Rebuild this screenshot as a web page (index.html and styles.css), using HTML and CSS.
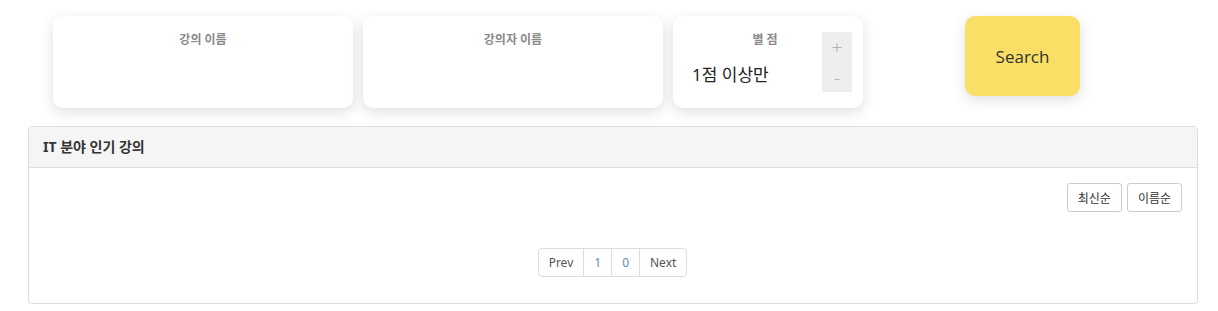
FILE: index.html
```html
<!DOCTYPE html>
<html lang="ko">
<head>
    <meta charset="UTF-8">
    <meta name="viewport" content="width=device-width, initial-scale=1.0">
    <title>강의 검색</title>
    <link rel="stylesheet" href="styles.css">
</head>
<body>
    <!-- 검색 영역 -->
    <div class="search-row">
        <div class="search-card">
            <div class="card-label">강의 이름</div>
        </div>
        <div class="search-card">
            <div class="card-label">강의자 이름</div>
        </div>
        <div class="search-card rating-card">
            <div class="rating-main">
                <div class="card-label rating-label">별 점</div>
                <div class="rating-value">1점 이상만</div>
            </div>
            <div class="stepper">
                <button class="step">+</button>
                <button class="step">-</button>
            </div>
        </div>
        <button class="search-btn">Search</button>
    </div>

    <!-- 강의 목록 -->
    <div class="panel">
        <div class="panel-heading">IT 분야 인기 강의</div>
        <div class="panel-body">
            <div class="sort-buttons">
                <button class="sort-btn">최신순</button>
                <button class="sort-btn">이름순</button>
            </div>
            <ul class="pagination">
                <li><a href="#" class="page-text">Prev</a></li>
                <li><a href="#">1</a></li>
                <li><a href="#">0</a></li>
                <li><a href="#" class="page-text">Next</a></li>
            </ul>
        </div>
    </div>
</body>
</html>
```

FILE: styles.css
```css
body {
    margin: 0;
    padding: 0;
    background-color: #fff;
    color: #333;
    font-family: "Noto Sans", "Noto Sans CJK KR", sans-serif;
}

.search-row {
    display: flex;
    align-items: flex-start;
    gap: 10px;
    padding: 16px 0 0 53px;
}

.search-card {
    width: 300px;
    height: 92px;
    background-color: #fff;
    border-radius: 10px;
    box-shadow: 0 4px 14px rgba(0, 0, 0, 0.13);
    box-sizing: border-box;
    padding-top: 14px;
}

.card-label {
    text-align: center;
    font-size: 12px;
    font-weight: bold;
    color: #8a8a8a;
    line-height: 20px;
}

.rating-card {
    width: 190px;
    display: flex;
    padding: 14px 11px 0 19px;
}

.rating-main {
    flex: 1;
}

.rating-label {
    padding-left: 16px;
}

.rating-value {
    margin-top: 13px;
    font-size: 17px;
    color: #222;
    line-height: 24px;
}

.stepper {
    width: 30px;
    height: 60px;
    margin-top: 2px;
    background-color: #eee;
    border-radius: 2px;
    display: flex;
    flex-direction: column;
}

.step {
    flex: 1;
    border: none;
    background: none;
    padding: 0;
    color: #b0b0b0;
    font-size: 19px;
    font-weight: 300;
    font-family: inherit;
}

.search-btn {
    width: 115px;
    height: 80px;
    margin-left: 92px;
    background-color: #f9df65;
    border: none;
    border-radius: 10px;
    box-shadow: 0 4px 14px rgba(0, 0, 0, 0.13);
    font-family: "Open Sans", sans-serif;
    font-size: 17px;
    color: #333;
}

.panel {
    width: 1170px;
    margin: 18px 0 0 28px;
    border: 1px solid #ddd;
    border-radius: 4px;
    box-sizing: border-box;
    box-shadow: 0 1px 1px rgba(0, 0, 0, 0.05);
}

.panel-heading {
    height: 40px;
    line-height: 40px;
    padding: 0 14px;
    background-color: #f5f5f5;
    border-bottom: 1px solid #ddd;
    border-radius: 3px 3px 0 0;
    font-size: 14px;
    font-weight: bold;
    color: #333;
}

.panel-body {
    padding: 15px 15px 26px;
}

.sort-buttons {
    display: flex;
    justify-content: flex-end;
    gap: 5px;
}

.sort-btn {
    height: 29px;
    padding: 0 10px;
    background-color: #fff;
    border: 1px solid #ccc;
    border-radius: 3px;
    font-family: inherit;
    font-size: 12px;
    color: #333;
}

.pagination {
    display: flex;
    justify-content: center;
    list-style: none;
    margin: 36px 0 0;
    padding: 0;
}

.pagination a {
    display: block;
    height: 27px;
    line-height: 27px;
    padding: 0 10px;
    border: 1px solid #ddd;
    margin-left: -1px;
    font-size: 12px;
    color: #5a8cc0;
    text-decoration: none;
}

.pagination .page-text {
    color: #555;
}

.pagination li:first-child a {
    border-radius: 4px 0 0 4px;
}

.pagination li:last-child a {
    border-radius: 0 4px 4px 0;
}
```
